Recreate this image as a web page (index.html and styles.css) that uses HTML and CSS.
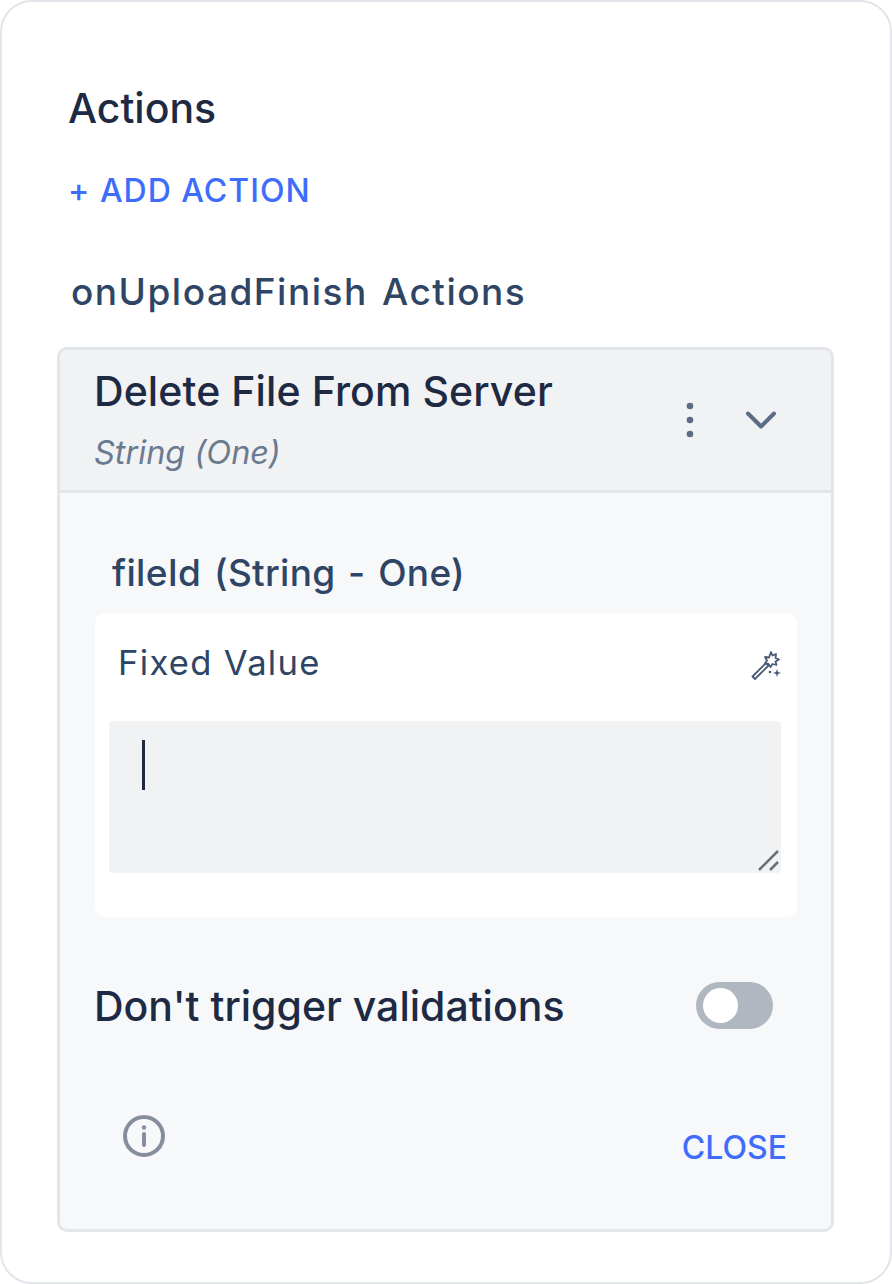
FILE: index.html
```html
<!DOCTYPE html>
<html lang="en">
<head>
<meta charset="utf-8">
<title>Actions</title>
<link rel="stylesheet" href="styles.css">
</head>
<body>
<main class="panel">
  <h2 class="title">Actions</h2>
  <a class="add-link">+ ADD ACTION</a>
  <h3 class="subtitle">onUploadFinish Actions</h3>
  <section class="action">
    <header class="action-head">
      <div class="action-names">
        <div class="action-name">Delete File From Server</div>
        <div class="action-type">String (One)</div>
      </div>
      <svg class="icon-dots" width="12" height="40" viewBox="0 0 12 40"><circle cx="6" cy="6" r="3.300"/><circle cx="6" cy="20" r="3.300"/><circle cx="6" cy="34" r="3.300"/></svg>
      <svg class="icon-chevron" width="32" height="20" viewBox="0 0 32 20"><path d="M3 3.500L16 16.500L29 3.500"/></svg>
    </header>
    <div class="action-body">
      <div class="param-label">fileId (String - One)</div>
      <div class="value-card">
        <div class="value-head">
          <span class="value-label">Fixed Value</span>
          <svg class="icon-wand" width="32" height="32" viewBox="0 0 32 32">
            <path class="wand-line" d="M2.500 27.500L5 30L18.500 16.500L16 14Z"/>
            <path class="wand-line" d="M21 3L22.500 6.500L26 5L25.500 9L29 10.500L25.500 12.500L26.500 16L22.500 15L20.500 18L18.500 15L15 14.500L17 11.500L15 8L19 8.500Z"/>
            <path class="wand-fill" d="M27 20L28 23L31 24L28 25L27 28L26 25L23 24L26 23Z"/>
            <circle class="wand-fill" cx="20" cy="23" r="1.300"/>
          </svg>
        </div>
        <div class="textarea">
          <span class="caret"></span>
          <svg class="icon-resize" width="24" height="24" viewBox="0 0 24 24"><path d="M2 21L21 2M13 21L21 13"/></svg>
        </div>
      </div>
      <div class="toggle-row">
        <span class="toggle-label">Don't trigger validations</span>
        <span class="toggle"><span class="knob"></span></span>
      </div>
      <div class="action-foot">
        <svg class="icon-info" width="44" height="44" viewBox="0 0 44 44"><circle cx="22" cy="22" r="19"/><path d="M22 20V31"/><circle class="info-dot" cx="22" cy="13.500" r="2.200"/></svg>
        <a class="close-link">CLOSE</a>
      </div>
    </div>
  </section>
</main>
</body>
</html>
```
FILE: styles.css
```css
* { box-sizing: border-box; }
html, body { margin: 0; padding: 0; background: #fff; }
body { font-family: Inter, "Liberation Sans", sans-serif; width: 892px; height: 1284px; }
.panel {
  width: 892px;
  height: 1284px;
  border: 2px solid #e2e5ea;
  border-radius: 32px;
  background: #fff;
  padding: 82px 56px 0 55px;
  display: flex;
  flex-direction: column;
  align-items: stretch;
}
.title { margin: 0 0 0 11px; font-size: 41px; line-height: 48px; font-weight: 450; color: #1e2a43; }
.add-link { margin: 37px 0 0 11px; font-size: 32px; line-height: 44px; font-weight: 450; letter-spacing: 1px; color: #3d6dfa; }
.subtitle { margin: 55px 0 0 14px; font-size: 37px; line-height: 48px; font-weight: 450; letter-spacing: 1.500px; word-spacing: 3px; color: #2f4565; }
.action { margin-top: 31px; width: 777px; height: 885px; border: 3px solid #e2e5ea; border-radius: 10px; background: #f7f8fa; display: flex; flex-direction: column; overflow: hidden; }
.action-head { height: 143px; flex: none; background: #f1f2f4; border-bottom: 3px solid #e2e5ea; padding: 0 54px 0 34px; display: flex; align-items: center; }
.action-names { flex: 1; display: flex; flex-direction: column; align-self: flex-start; padding-top: 16px; }
.action-name { font-size: 41px; line-height: 50px; font-weight: 450; letter-spacing: .1px; color: #1e2a43; }
.action-type { margin-top: 17px; font-size: 32.500px; line-height: 40px; font-style: italic; color: #6a7a8f; }
.icon-dots { fill: #5c6c85; margin-right: 49px; margin-top: -1px; }
.icon-chevron { fill: none; stroke: #5c6c85; stroke-width: 4px; stroke-linecap: round; stroke-linejoin: round; }
.action-body { flex: 1; padding: 0 35px; display: flex; flex-direction: column; }
.param-label { margin: 57px 0 0 17px; font-size: 37px; line-height: 46px; font-weight: 450; letter-spacing: .3px; word-spacing: 2.500px; color: #2f4565; }
.value-card { margin-top: 17px; width: 702px; height: 304px; background: #fff; border-radius: 10px; padding: 0 16px 0 14px; }
.value-head { height: 108px; display: flex; justify-content: space-between; align-items: flex-start; padding: 27px 0 0 9px; }
.value-label { font-size: 34.600px; line-height: 44px; letter-spacing: 1.300px; color: #2f4565; }
.icon-wand { margin-top: 9px; margin-right: -1px; }
.wand-line { fill: none; stroke: #4a5b75; stroke-width: 1.800px; stroke-linejoin: round; }
.wand-fill { fill: #4a5b75; }
.textarea { position: relative; height: 152px; background: #f1f2f4; border-radius: 4px; padding: 19px 33px; }
.caret { display: block; width: 2.500px; height: 50px; background: #1e2a43; }
.icon-resize { position: absolute; right: 0; bottom: 0; fill: none; stroke: #6b6f75; stroke-width: 2.500px; }
.toggle-row { margin-top: 64px; height: 50px; display: flex; align-items: center; justify-content: space-between; padding-right: 23px; }
.toggle-label { margin-left: -1px; font-size: 41px; line-height: 50px; font-weight: 450; color: #1e2a43; }
.toggle { width: 77px; height: 47px; margin-top: -2px; border-radius: 24px; background: #b1b7c1; padding: 7px; display: flex; align-items: center; }
.knob { width: 35px; height: 35px; border-radius: 50%; background: #fff; }
.action-foot { margin-top: 85px; display: flex; justify-content: space-between; align-items: flex-start; padding: 0 9px 0 27px; }
.icon-info { fill: none; stroke: #858e9c; stroke-width: 4px; stroke-linecap: round; margin-top: -2px; }
.info-dot { fill: #858e9c; stroke: none; }
.close-link { margin-top: 10px; font-size: 32px; line-height: 44px; font-weight: 450; color: #3d6dfa; }
```
